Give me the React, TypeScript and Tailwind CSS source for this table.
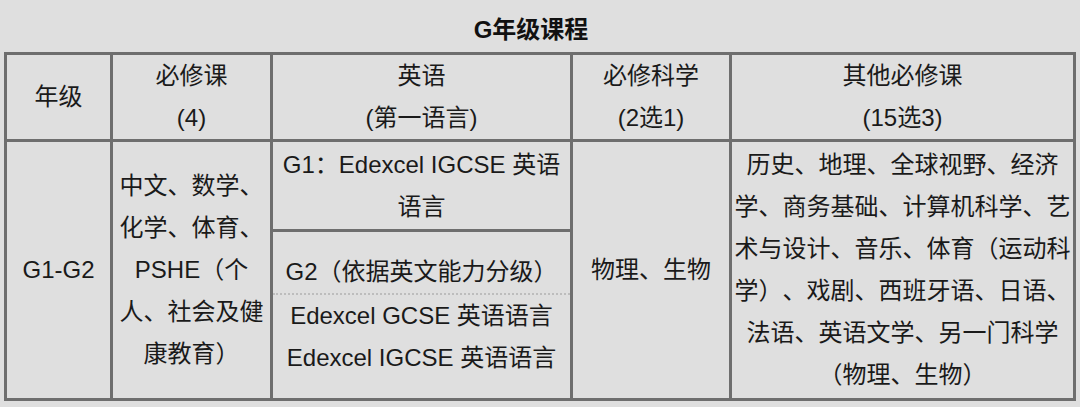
const font = "font-['Liberation_Sans','Noto_Sans_CJK_SC',sans-serif]";

const Lines = ({ lines }: { lines: string[] }) => (
  <>
    {lines.map((l) => (
      <div key={l} className="whitespace-nowrap">
        {l}
      </div>
    ))}
  </>
);

const Cell = ({ children, className = "" }: { children: React.ReactNode; className?: string }) => (
  <div className={`bg-[#dfdfdf] flex flex-col items-center justify-center text-center ${className}`}>
    {children}
  </div>
);

export default function App() {
  return (
    <div
      className={`w-[1080px] h-[407px] bg-[#dfdfdf] px-[4px] text-[24px] leading-[42px] text-[#1a1a1a] [text-spacing-trim:space-all] ${font}`}
    >
      <div className="h-[52px] pt-[12px] pr-[18px] text-center font-bold leading-[36px] text-[#111]">G年级课程</div>

      <div className="grid grid-cols-[103px_157px_297px_156px_341px] grid-rows-[84px_256px] gap-[3px] p-[3px] bg-[#6e6e6e]">
        {/* header */}
        <Cell>年级</Cell>
        <Cell>
          <Lines lines={["必修课", "(4)"]} />
        </Cell>
        <Cell>
          <Lines lines={["英语", "(第一语言)"]} />
        </Cell>
        <Cell>
          <Lines lines={["必修科学", "(2选1)"]} />
        </Cell>
        <Cell>
          <Lines lines={["其他必修课", "(15选3)"]} />
        </Cell>

        {/* body */}
        <Cell>G1-G2</Cell>
        <Cell>
          <Lines lines={["中文、数学、", "化学、体育、", "PSHE（个", "人、社会及健", "康教育）"]} />
        </Cell>
        <div className="flex flex-col gap-[3px]">
          <Cell className="h-[87px]">
            <Lines lines={["G1：Edexcel IGCSE 英语", "语言"]} />
          </Cell>
          <Cell className="flex-1 items-stretch">
            <div className="border-b-2 border-dotted border-[#bdbdbd] whitespace-nowrap">G2（依据英文能力分级）</div>
            <Lines lines={["Edexcel GCSE 英语语言", "Edexcel IGCSE 英语语言"]} />
          </Cell>
        </div>
        <Cell>物理、生物</Cell>
        <Cell>
          <Lines
            lines={[
              "历史、地理、全球视野、经济",
              "学、商务基础、计算机科学、艺",
              "术与设计、音乐、体育（运动科",
              "学）、戏剧、西班牙语、日语、",
              "法语、英语文学、另一门科学",
              "（物理、生物）",
            ]}
          />
        </Cell>
      </div>
    </div>
  );
}
